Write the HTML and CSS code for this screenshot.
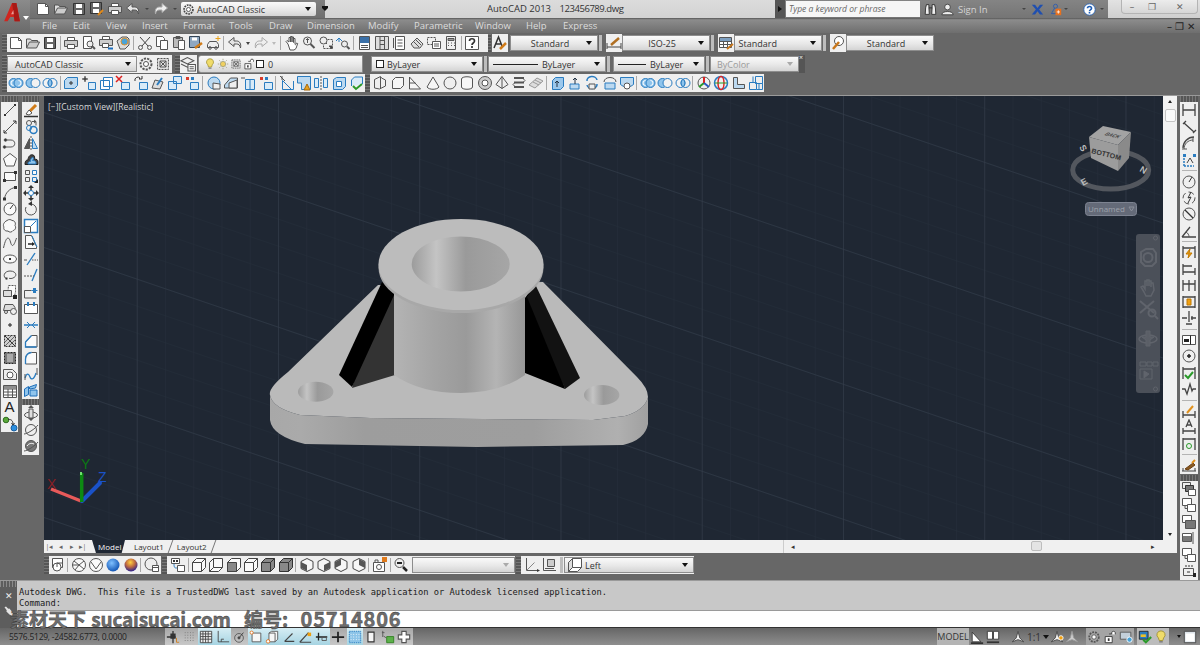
FILE: index.html
```html
<!DOCTYPE html>
<html lang="en">
<head>
  <meta charset="UTF-8" />
  <title>AutoCAD 2013 - 123456789.dwg</title>
  <link rel="stylesheet" href="styles.css">
</head>
<body>
<svg class="defs" aria-hidden="true">
  <defs>
    <!-- file / edit -->
    <symbol id="new" viewBox="0 0 16 16"><path fill="#fff" d="M2.5 2.5h8l3 3v8h-11z"/><path d="M10.5 2.5v3h3"/></symbol>
    <symbol id="open" viewBox="0 0 16 16"><path fill="#ddd" d="M1.5 13V4h4l1 1.5h6V7"/><path fill="#ccc" d="M1.5 13l3-6h10l-3 6z"/></symbol>
    <symbol id="save" viewBox="0 0 16 16"><path fill="#666" stroke="#333" d="M2.5 2.5h11v11h-11z"/><path fill="#fff" stroke="none" d="M5 3h6v4H5zM5 9h6v4H5z"/></symbol>
    <symbol id="saveas" viewBox="0 0 16 16"><path fill="#666" stroke="#333" d="M1.5 1.5h11v11h-11z"/><path fill="#fff" stroke="none" d="M4 2h6v4H4zM4 8h6v4H4z"/><path stroke="#e08a1c" stroke-width="2" d="M9 14l5-5"/></symbol>
    <symbol id="print" viewBox="0 0 16 16"><path fill="#fff" d="M4.5 5.5v-3h7v3"/><path fill="#ccc" d="M1.5 5.5h13v6h-13z"/><path fill="#fff" d="M4.5 9.5h7v4h-7z"/></symbol>
    <symbol id="prev" viewBox="0 0 16 16"><path fill="#fff" d="M2.5 1.5h8v12h-8z"/><circle cx="9" cy="9" r="3" fill="#eee"/><path stroke-width="2" d="M11 11l3 3"/></symbol>
    <symbol id="plot" viewBox="0 0 16 16"><path fill="#fff" d="M4.5 4.5v-3h7v3"/><path fill="#ccc" d="M1.5 4.5h13v6h-13z"/><path fill="#fff" d="M4.5 8.5h6v4h-6z"/><path stroke="#1c6fc0" stroke-width="2" d="M10 13.5h5"/></symbol>
    <symbol id="pub" viewBox="0 0 16 16"><path fill="#ddd" d="M2 6l5-4h5l2 2v6l-4 4H5z"/><circle cx="9.5" cy="6.5" r="3.5" fill="#4aa3d8" stroke="#e0902a"/></symbol>
    <symbol id="cut" viewBox="0 0 16 16"><path stroke="#444" d="M3 2l8 9M13 2L5 11"/><circle cx="3.5" cy="12.5" r="2"/><circle cx="12.5" cy="12.5" r="2"/></symbol>
    <symbol id="copy" viewBox="0 0 16 16"><path fill="#fff" d="M2.5 1.5h6l2 2v8h-8z"/><path fill="#fff" d="M6.5 5.5h7v9h-7z"/></symbol>
    <symbol id="paste" viewBox="0 0 16 16"><path fill="#bbb" d="M2.5 2.5h9v10h-9z"/><path fill="#fff" d="M7.5 5.5h6v9h-6z"/><path d="M5 1.5h4v2H5z"/></symbol>
    <symbol id="match" viewBox="0 0 16 16"><path fill="#8fa7c0" stroke="#345" d="M1.5 1.5h10v11h-10z"/><path fill="#fff" stroke="none" d="M4 2.5h5v3H4z"/><path stroke="#d07b18" stroke-width="2.5" d="M7 13l7-5"/></symbol>
    <symbol id="blk" viewBox="0 0 16 16"><path fill="#eee" d="M1.5 9.5l2-3h7l2 3v3h-11z"/><circle cx="4" cy="13" r="1.3"/><circle cx="10" cy="13" r="1.3"/><path stroke="#e8a21c" d="M12 1v5M9.500 3.500h5"/></symbol>
    <symbol id="undo" viewBox="0 0 16 16"><path fill="#e4e4e4" stroke="#555" d="M7 2.500L1.500 7 7 11.500V9h2.500c2 0 3.500 1 4 4 .8-4-.5-7-4-7H7z"/></symbol>
    <symbol id="redo" viewBox="0 0 16 16"><path fill="#eee" stroke="#aaa" d="M9 2.500L14.500 7 9 11.500V9H6.500c-2 0-3.500 1-4 4-.8-4 .5-7 4-7H9z"/></symbol>
    <symbol id="pan" viewBox="0 0 16 16"><path fill="#fff" d="M4 9L2 6.500l1-1L5 7V2.500h1.500V7V1.500H8V7V2h1.500v5.500V3.500H11V9c0 1 1 1 1.500-1l1.200.5L12 13.500 10 15H6z"/></symbol>
    <symbol id="zr" viewBox="0 0 16 16"><circle cx="6.500" cy="6" r="4" fill="#eee"/><path stroke-width="2" d="M9.500 9l4 4"/><path d="M6.500 3.500V8M5 5l1.500-1.500L8 5"/></symbol>
    <symbol id="zw" viewBox="0 0 16 16"><circle cx="5.500" cy="5.500" r="3.500" fill="#eee"/><path d="M8 8l1 1"/><path stroke-dasharray="2 1" d="M9.500 4.500h5v9h-9v-3"/><path fill="#333" d="M11 11h3v3z"/></symbol>
    <symbol id="zp" viewBox="0 0 16 16"><circle cx="9.500" cy="9" r="3" fill="#eee"/><path stroke-width="2" d="M12 11.500l2.500 2.500"/><path stroke="#2a7cc0" d="M1 6l3-3 3 3M4 3v4"/></symbol>
    <symbol id="prop" viewBox="0 0 16 16"><path fill="#fff" d="M2.500 1.500h10v13h-10z"/><path fill="#3a70a8" stroke="none" d="M3 2h9v6H3z"/><path d="M4 10.500h7M4 12.500h7"/></symbol>
    <symbol id="dc" viewBox="0 0 16 16"><path fill="#ddd" d="M1.500 1.500h13v13h-13z"/><path d="M6 1.500v13M10.500 1.500v13M6 5.500h4.500M6 9.500h4.500"/></symbol>
    <symbol id="sheet" viewBox="0 0 16 16"><path fill="#fff" d="M4.500 1.500h9v13h-9z"/><path d="M2.500 3v10M6.500 5h5M6.500 8h5M6.500 11h5"/></symbol>
    <symbol id="markup" viewBox="0 0 16 16"><path fill="#ddd" d="M2 9l6-6 6 6-3 4H5z"/><path d="M5 7l5 5M7 5l5 5"/></symbol>
    <symbol id="sset" viewBox="0 0 16 16"><path stroke-dasharray="2 1" d="M1.500 2.500h8v7h-8z"/><path fill="#fff" d="M6.500 6.500h8v7h-8z"/><path d="M8 9h5M8 11h5"/></symbol>
    <symbol id="calc" viewBox="0 0 16 16"><path fill="#eee" d="M3.500 1.500h9v13h-9z"/><path fill="#999" d="M5 3.500h6v2H5z"/><path d="M5 8h1M8 8h1M11 8h1M5 10.500h1M8 10.500h1M11 10.500h1"/></symbol>
    <symbol id="help" viewBox="0 0 16 16"><path fill="#fff" d="M1.500 1.500h13v13h-13z"/><path stroke="#333" stroke-width="1.700" d="M5.500 6c0-3 5-3 5 0 0 2-2.500 2-2.500 4M8 11v2"/></symbol>
    <symbol id="tsty" viewBox="0 0 16 16"><path stroke="#333" stroke-width="1.500" d="M2 13L6.500 2 10 11M3.500 9h5"/><path stroke="#d07b18" stroke-width="2.500" d="M8 14l6-6"/></symbol>
    <symbol id="dsty" viewBox="0 0 16 16"><path stroke="#444" d="M1 8v6M15 8v6M1 12h14"/><path stroke="#b06f22" stroke-width="2.500" d="M5 10l8-7"/></symbol>
    <symbol id="tbs" viewBox="0 0 16 16"><path fill="#fff" d="M1.500 2.500h12v10h-12z"/><path fill="#7d9fc0" stroke="none" d="M2 3h11v3H2z"/><path d="M1.500 6.500h12M1.500 9.500h12M5.500 6.500v6M9.500 6.500v6"/><path stroke="#c8761a" stroke-width="2" d="M9 14l6-5"/></symbol>
    <symbol id="mls" viewBox="0 0 16 16"><circle cx="9" cy="6" r="4.500" fill="#fff"/><path stroke="#c8761a" stroke-width="2.500" d="M3 14l6-7"/></symbol>
    <symbol id="gear" viewBox="0 0 16 16"><circle cx="8" cy="8" r="5.500" stroke-dasharray="2.200 1.100" stroke-width="2" fill="none"/><circle cx="8" cy="8" r="2.500" fill="#fff"/></symbol>
    <symbol id="lock" viewBox="0 0 16 16"><path fill="#ddd" stroke-dasharray="2 1" d="M2.500 2.500h11v11h-11z"/><path d="M5 5h6v6H5z"/><path d="M5 5l6 6M11 5l-6 6"/></symbol>
    <symbol id="layer" viewBox="0 0 16 16"><path d="M1 5l6-3 6 3-6 3z"/><path d="M1 8l6 3 1-.5"/><path fill="#fff" d="M7.500 8.500h7v6h-7z"/><path d="M9 10.500h4M9 12.500h4"/></symbol>
    <!-- solid editing -->
    <symbol id="uni" viewBox="0 0 16 16"><circle cx="5.500" cy="8" r="4.500" fill="#8fc4ec" stroke="#2a7cc0"/><circle cx="10.500" cy="8" r="4.500" fill="#8fc4ec" stroke="#2a7cc0"/><path stroke="#fff" d="M5.500 5.500a2.500 2.500 0 0 0 0 5M10.500 5.500a2.500 2.500 0 0 1 0 5"/></symbol>
    <symbol id="sbt" viewBox="0 0 16 16"><circle cx="5.500" cy="8" r="4.500" fill="#8fc4ec" stroke="#2a7cc0"/><circle cx="10.500" cy="8" r="4.500" fill="#f2f2f2" stroke="#2a7cc0"/></symbol>
    <symbol id="its" viewBox="0 0 16 16"><circle cx="5.500" cy="8" r="4.500" fill="#f2f2f2" stroke="#2a7cc0"/><circle cx="10.500" cy="8" r="4.500" fill="none" stroke="#2a7cc0"/><path fill="#8fc4ec" stroke="#2a7cc0" d="M8 4.300a4.500 4.500 0 0 1 0 7.400 4.500 4.500 0 0 1 0-7.400z"/></symbol>
    <symbol id="s1" viewBox="0 0 16 16"><path fill="#bcd9f0" stroke="#2a7cc0" d="M1.500 5.500l3-3h10v8l-3 3h-10z"/><path stroke="#333" d="M8 10V6M6 8h4"/></symbol>
    <symbol id="s2" viewBox="0 0 16 16"><path stroke="#2a7cc0" fill="#d9ebf8" d="M7.500 7.500h7v7h-7z"/><path stroke="#333" d="M1 4h6M4 1v6"/><path fill="#333" d="M3 3h2v2H3z"/></symbol>
    <symbol id="s3" viewBox="0 0 16 16"><path stroke="#2a7cc0" fill="#fff" d="M5.500 2.500h9v9h-9zM2.500 5.500h9v9h-9z"/></symbol>
    <symbol id="s4" viewBox="0 0 16 16"><path stroke="#2a7cc0" fill="#d9ebf8" d="M6.500 7.500h8v7h-8z"/><path stroke="#d22" stroke-width="1.500" d="M1 1l6 6M7 1L1 7"/></symbol>
    <symbol id="s5" viewBox="0 0 16 16"><path stroke="#2a7cc0" fill="#d9ebf8" d="M6.500 7.500h8v7h-8z"/><path stroke="#333" d="M2 6a3 3 0 0 1 5-3l-1 1h3V1"/></symbol>
    <symbol id="s6" viewBox="0 0 16 16"><path fill="#ddd" stroke="#555" d="M2 13l3-8 8 2-3 7z"/><path stroke="#2a7cc0" stroke-width="2" d="M7 10l5-7"/></symbol>
    <symbol id="s7" viewBox="0 0 16 16"><path stroke="#2a7cc0" fill="#d9ebf8" d="M6.500 1.500h8v7h-8zM1.500 6.500h8v8h-8z"/></symbol>
    <symbol id="s8" viewBox="0 0 16 16"><path fill="#d83a2a" stroke="none" d="M2 2h3v3H2z"/><path fill="#2a7cc0" stroke="none" d="M7 2h3v3H7z"/><path stroke="#2a7cc0" fill="#d9ebf8" d="M6.500 7.500h8v7h-8z"/></symbol>
    <symbol id="s9" viewBox="0 0 16 16"><circle cx="8" cy="8" r="6" fill="#bcd9f0" stroke="#2a7cc0"/><path fill="#eee" stroke="#555" d="M7 14V8l7 1v5z"/></symbol>
    <symbol id="s10" viewBox="0 0 16 16"><path fill="#bcd9f0" stroke="#555" d="M1.500 10l6-7h7v10h-13z"/><path fill="#eee" stroke="#555" d="M6 13V8l8-3v8z"/></symbol>
    <symbol id="s11" viewBox="0 0 16 16"><path stroke="#555" d="M1 3h4"/><path fill="#d9ebf8" stroke="#2a7cc0" d="M5.500 4.500h9v10h-9z"/><path stroke="#2a7cc0" d="M10 4.500v10"/></symbol>
    <symbol id="s12" viewBox="0 0 16 16"><path stroke="#555" d="M1 1l5 5M3 1v4"/><path fill="none" stroke="#2a7cc0" d="M3.500 14.500v-9l9 9zM8 14.500h6.500V6"/></symbol>
    <symbol id="s13" viewBox="0 0 16 16"><path fill="#bcd9f0" stroke="#2a7cc0" d="M1.500 1.500h13v13h-9V8h-4z"/><path fill="#e8a21c" stroke="#a5680f" d="M8 15l3-6 3 6z"/></symbol>
    <symbol id="s14" viewBox="0 0 16 16"><path fill="#d9ebf8" stroke="#2a7cc0" d="M1.500 3.500h4v9h-4zM10.500 3.500h4v9h-4z"/><path stroke="#555" stroke-dasharray="2 1" d="M8 1v14"/></symbol>
    <symbol id="s15" viewBox="0 0 16 16"><path fill="#bcd9f0" stroke="#2a7cc0" d="M2.500 4.500l3-2h9v9l-3 3h-9z"/><path fill="#fff" stroke="#2a7cc0" d="M5.500 6.500h5v5h-5z"/></symbol>
    <symbol id="s16" viewBox="0 0 16 16"><path fill="#d9ebf8" stroke="#2a7cc0" d="M3.500 11V5l3-3h8v7"/><path stroke="#2a9a2a" stroke-width="2" d="M5 11l3 3 6-5"/></symbol>
    <!-- modeling -->
    <symbol id="m1" viewBox="0 0 16 16"><path fill="#eee" d="M1.500 13V4.500l6-3 1 1.500 4 2v6l-6 3z"/><path d="M7.500 2v11"/></symbol>
    <symbol id="m2" viewBox="0 0 16 16"><path fill="#f6f6f6" d="M2.500 5.500l3-3h8v8l-3 3h-8z"/></symbol>
    <symbol id="m3" viewBox="0 0 16 16"><path fill="#f6f6f6" d="M2.500 14V2l11 12z"/><path d="M2.500 8h6"/></symbol>
    <symbol id="m4" viewBox="0 0 16 16"><path fill="#f6f6f6" d="M8 2l6 10c-2 3-10 3-12 0z"/></symbol>
    <symbol id="m5" viewBox="0 0 16 16"><circle cx="8" cy="8" r="6" fill="#eee"/></symbol>
    <symbol id="m6" viewBox="0 0 16 16"><path fill="#f6f6f6" d="M2.500 4c0-3 11-3 11 0v8c0 3-11 3-11 0z"/></symbol>
    <symbol id="m7" viewBox="0 0 16 16"><circle cx="8" cy="8" r="6.500" fill="#ccc"/><circle cx="8" cy="8" r="3" fill="#fff"/></symbol>
    <symbol id="m8" viewBox="0 0 16 16"><path fill="#eee" d="M8 1.500l6 8-6 4-6-4z"/><path d="M8 1.500v12"/></symbol>
    <symbol id="m9" viewBox="0 0 16 16"><path d="M3 3.500h9l2 2-2 2H4L2 9.500l2 2h9"/><path stroke-width="2" d="M3 3h10M3 7.500h10M3 12h10"/></symbol>
    <symbol id="m10" viewBox="0 0 16 16"><path fill="#ddd" stroke="#999" d="M1 10l8-7 6 3-8 7z"/><path stroke="#999" d="M5 7l6 3M7 5l6 3"/></symbol>
    <symbol id="m11" viewBox="0 0 16 16"><path fill="#9cc8ec" stroke="#2a7cc0" d="M2.500 5.500l3-3h8v9l-3 3h-8z"/><path stroke="#234" d="M7 12V6M5 8l2-2 2 2"/></symbol>
    <symbol id="m12" viewBox="0 0 16 16"><path fill="#bcd9f0" stroke="#2a7cc0" d="M3 9h9v5H3z"/><path stroke="#234" d="M8 9V3M6 5l2-2 2 2"/></symbol>
    <symbol id="m13" viewBox="0 0 16 16"><path stroke="#2a7cc0" fill="none" stroke-width="1.500" d="M3 6a5 4 0 0 1 10-1M13 9a5 4 0 0 1-10 1"/><path fill="#eee" stroke="#555" d="M5 9h6v5H5z"/></symbol>
    <symbol id="m14" viewBox="0 0 16 16"><path stroke="#555" d="M2 7c0-6 12-6 12 0"/><path fill="#bcd9f0" stroke="#2a7cc0" d="M3 8h10v6H3z"/></symbol>
    <symbol id="m15" viewBox="0 0 16 16"><path fill="#bcd9f0" stroke="#2a7cc0" d="M1.500 2.500h13v7l-3 2h-7l-3-2z"/><circle cx="8" cy="11" r="3" fill="#fff" stroke="#555"/></symbol>
    <symbol id="o3" viewBox="0 0 16 16"><circle cx="8" cy="8" r="6" stroke="#555"/><path stroke="#2a9a2a" stroke-width="2" d="M8 8L3 12"/><path stroke="#d22" stroke-width="2" d="M8 8V2"/><path stroke="#2a5ac0" stroke-width="2" d="M8 8l5 4"/></symbol>
    <symbol id="o4" viewBox="0 0 16 16"><circle cx="8" cy="8" r="6.500" stroke="#2a7cc0" stroke-width="1.500"/><ellipse cx="8" cy="8" rx="3" ry="6.500" stroke="#d22" stroke-width="1.500"/><path stroke="#2a9a2a" d="M2 8h12"/></symbol>
    <symbol id="o5" viewBox="0 0 16 16"><path fill="#bcd9f0" stroke="#555" d="M3.500 2.500h4v7h7v4h-11z"/></symbol>
    <symbol id="o6" viewBox="0 0 16 16"><path stroke="#2a7cc0" d="M7.500 1.500h7v7h-7zM1.500 7.500h7v7h-7zM7.500 8.500h7v6h-6M5 1.500v6M11 8.500v6"/></symbol>
    <!-- draw -->
    <symbol id="line" viewBox="0 0 16 16"><path d="M3 13L13 3"/><path fill="#333" stroke="none" d="M2 12h2v2H2zM12 2h2v2h-2z"/></symbol>
    <symbol id="xline" viewBox="0 0 16 16"><path d="M2 14L14 2"/><path stroke="#333" d="M2 11v3h3M11 2h3v3"/></symbol>
    <symbol id="pline" viewBox="0 0 16 16"><path d="M2 12h7c5 0 5-7 0-7H4"/><circle cx="2.500" cy="12" r="1.300" fill="#333"/><circle cx="3.500" cy="5" r="1.300" fill="#333"/></symbol>
    <symbol id="polygon" viewBox="0 0 16 16"><path fill="#fafafa" d="M8 1.500l6.500 5-2.500 7.500H4L1.500 6.500z"/></symbol>
    <symbol id="rect" viewBox="0 0 16 16"><path fill="#fafafa" d="M2.500 4.500h11v8h-11z"/><path fill="#333" stroke="none" d="M12 3h3v3h-3zM1 11h3v3H1z"/></symbol>
    <symbol id="arc" viewBox="0 0 16 16"><path d="M2.500 14C3 8 8 3 13.500 2.500"/><path fill="#333" stroke="none" d="M1 12.500h3v3H1zM12 1h3v3h-3z"/></symbol>
    <symbol id="circle" viewBox="0 0 16 16"><circle cx="8" cy="8" r="6" fill="#fafafa"/><path stroke="#333" d="M8 8l3-4"/></symbol>
    <symbol id="cloud" viewBox="0 0 16 16"><path fill="#fafafa" d="M5 2.500c2-1.500 4-1 5 0 3 0 4 3 3 5 1.500 2 0 5-2 5-1 2-4 2-5 .5-3 .5-5-2-4-4-1.500-2 0-5 3-6.500z"/></symbol>
    <symbol id="spline" viewBox="0 0 16 16"><path d="M1.500 14C4 2 7 2 8.500 8s3.500 4 6-4"/></symbol>
    <symbol id="ellipse" viewBox="0 0 16 16"><ellipse cx="8" cy="8" rx="6.500" ry="4" fill="#fafafa"/><path fill="#333" stroke="none" d="M7 7h2v2H7z"/></symbol>
    <symbol id="earc" viewBox="0 0 16 16"><path d="M5 12C0 10 2 4 8 4s8 5 3 7c-1 .6-3 .6-4 .3"/><path fill="#333" stroke="none" d="M3.500 10.500h2v2h-2z"/></symbol>
    <symbol id="ins" viewBox="0 0 16 16"><path stroke-dasharray="2 1" fill="#fafafa" d="M6.500 1.500h7v6l-1 5h-7z"/><path fill="#ddd" d="M1.500 6.500h8v6h-8z"/><path fill="#222" stroke="none" d="M11 11h4v4h-4z"/></symbol>
    <symbol id="mkb" viewBox="0 0 16 16"><path fill="#ddd" d="M1.500 10.500l1.500-6h8l2 3v3z"/><circle cx="11.500" cy="11.500" r="3" fill="#eee"/><circle cx="4" cy="12" r="1.500"/></symbol>
    <symbol id="pt" viewBox="0 0 16 16"><circle cx="8" cy="8" r="1.300" fill="#555"/></symbol>
    <symbol id="hatch" viewBox="0 0 16 16"><path fill="#cfcfcf" stroke-dasharray="2 1" stroke="#333" d="M2.500 2.500h11v11h-11z"/><path stroke="#666" d="M3 9l6-6M3 13L13 3M7 13l6-6"/><path stroke="#333" d="M3 3l10 10"/></symbol>
    <symbol id="grad" viewBox="0 0 16 16"><path fill="#777" stroke-dasharray="2 1" stroke="#222" d="M2.500 2.500h11v11h-11z"/><path fill="#aaa" stroke="none" d="M5 4h6v8H5z"/></symbol>
    <symbol id="reg" viewBox="0 0 16 16"><path fill="#eee" d="M1.500 3.500h9l4 4v6h-13z"/><circle cx="8" cy="9" r="3" fill="#fff"/></symbol>
    <symbol id="tbl" viewBox="0 0 16 16"><path fill="#fff" d="M1.500 2.500h13v12h-13z"/><path fill="#8d8d8d" stroke="none" d="M2 3h12v2.500H2z"/><path d="M1.500 6h13M1.500 9h13M1.500 12h13M6 6v8.500M10.500 6v8.500"/></symbol>
    <symbol id="addsel" viewBox="0 0 16 16"><circle cx="4" cy="4" r="2.800" fill="#5aa83a" stroke="#2f6f20"/><circle cx="12" cy="12" r="3" fill="#2a8ee0" stroke="#1a5fa0"/><path stroke="#333" d="M6 3.500c4-.5 5 2 5 5M9.500 7l1.500 2 1.500-2"/></symbol>
    <!-- modify -->
    <symbol id="erase" viewBox="0 0 16 16"><path stroke="#d07b18" stroke-width="3" d="M7 9l6-6"/><path fill="#fff" stroke="#555" d="M3 12l3-4 3 3-3 2z"/><path stroke="#333" stroke-width="1.500" d="M1 14.500h14"/></symbol>
    <symbol id="cpo" viewBox="0 0 16 16"><circle cx="6" cy="4" r="2.500"/><circle cx="10.500" cy="11" r="3.500" stroke="#2a7cc0" stroke-width="1.500"/><circle cx="6" cy="9" r="2.500" stroke="#2a7cc0"/><path d="M9 2.500h4v4M11 1l2 1.500L11 4"/></symbol>
    <symbol id="mir" viewBox="0 0 16 16"><path fill="#555" d="M1.500 13.500l5-10v10z"/><path fill="#bcd9f0" stroke="#2a7cc0" d="M14.500 13.500l-5-10v10z"/><path stroke-dasharray="2 1" d="M8 1v14"/></symbol>
    <symbol id="off" viewBox="0 0 16 16"><path fill="#444" stroke="#222" d="M2 12.500C2 8 4 8 5 8c0-4 3-6 5-5 2 .5 2 3 1 4 3 0 4 1 4 3v2.500z"/><path fill="#8fc4ec" stroke="#2a7cc0" d="M5 12c0-2 1-2.500 2.500-2.500 0-3 1-4 2.500-4 1 .5 0 2.500-.5 3 3 0 3.500 1 3.500 3.500z"/></symbol>
    <symbol id="arr" viewBox="0 0 16 16"><path stroke="#2a7cc0" fill="#fafafa" d="M9.500 2.500h4v4h-4z"/><path d="M2.500 2.500h4v4h-4zM2.500 9.500h4v4h-4z"/><path stroke="#2a7cc0" d="M9.500 9.500h4v4h-4z"/><path fill="#222" stroke="none" d="M11 15l4-4v4z"/></symbol>
    <symbol id="mov" viewBox="0 0 16 16"><path stroke="#333" stroke-width="1.500" d="M8 1.500v13M1.500 8h13"/><path fill="#333" stroke="none" d="M8 0l3 3H5zM8 16l3-3H5zM0 8l3-3v6zM16 8l-3-3v6z"/><circle cx="8" cy="8" r="2.500" fill="#fff" stroke="#2a7cc0"/></symbol>
    <symbol id="rot" viewBox="0 0 16 16"><path d="M8 3a5.500 5.500 0 1 1-5 3"/><path fill="#333" stroke="none" d="M9 0v5L5 3z"/></symbol>
    <symbol id="scl" viewBox="0 0 16 16"><path fill="#fff" stroke="#2a7cc0" stroke-width="1.500" d="M1.500 1.500h13v13h-13z"/><path fill="#fff" stroke="#555" d="M1.500 8.500h6v6h-6z"/><path stroke="#2a7cc0" d="M8 8l5-5"/></symbol>
    <symbol id="str" viewBox="0 0 16 16"><path fill="#fafafa" d="M2.500 1.500h6l5 11v2h-11z"/><path stroke="#2a7cc0" d="M9 2l5 11"/><path stroke="#222" stroke-width="1.500" d="M5 10h5"/><path fill="#222" stroke="none" d="M9 8l3 2-3 2z"/></symbol>
    <symbol id="trim" viewBox="0 0 16 16"><path stroke="#2a7cc0" stroke-width="1.300" d="M12 2L4 14"/><path d="M1 9h3"/><path stroke-dasharray="1.500 1" d="M9 9h6"/></symbol>
    <symbol id="ext" viewBox="0 0 16 16"><path stroke="#2a7cc0" stroke-width="1.300" d="M14 2l-5 12"/><path stroke-dasharray="2 1" d="M1 9h10"/></symbol>
    <symbol id="brk" viewBox="0 0 16 16"><path d="M1.500 14V6.500h7"/><path stroke="#2a7cc0" d="M8.500 6.500h6"/><path fill="#2a7cc0" stroke="none" d="M10 4h3v5h-3z"/><path d="M1.500 14h12"/></symbol>
    <symbol id="jn" viewBox="0 0 16 16"><path fill="#fff" d="M1.500 4.500h13v9h-13z"/><path fill="#2a7cc0" stroke="none" d="M4 2h2v4H4zM10 2h2v4h-2z"/></symbol>
    <symbol id="jn2" viewBox="0 0 16 16"><path stroke="#2a7cc0" stroke-width="1.500" d="M1 8h14"/><path stroke="#2a7cc0" d="M4 5l3 3-3 3M12 5L9 8l3 3"/></symbol>
    <symbol id="cha" viewBox="0 0 16 16"><path fill="#fafafa" d="M2.500 14V9l6-6.500h5.500V14z"/><path stroke="#2a7cc0" stroke-width="1.300" d="M2.500 9l6-6.500M2.500 9v5h11"/></symbol>
    <symbol id="fil" viewBox="0 0 16 16"><path fill="#fafafa" stroke="#555" d="M13.500 2.500V14h-11V9c0-4 3-6.500 6-6.500z"/><path stroke="#2a7cc0" stroke-width="1.300" d="M2.500 14V9c0-4 3-6.500 6-6.500"/></symbol>
    <symbol id="ble" viewBox="0 0 16 16"><path stroke="#2a7cc0" stroke-width="1.300" d="M2 12c2-6 4-4 5-1s4 3 6-4"/><path d="M2 14V8M14 9V2"/></symbol>
    <symbol id="exp" viewBox="0 0 16 16"><path fill="#8fc4ec" stroke="#1f6eb8" d="M1.500 6l4-2.500v8l-4 2zM6.500 4l7-2.500-1 3.500-6 1zM7 7h7v6H7z"/></symbol>
    <symbol id="orb" viewBox="0 0 16 16"><ellipse cx="8" cy="10" rx="6.500" ry="3"/><path fill="#ddd" stroke="#555" d="M6 4h4v9H6z"/><path fill="#555" stroke="none" d="M8 0l3 3H5zM8 16l3-3H5z"/></symbol>
    <symbol id="orb2" viewBox="0 0 16 16"><circle cx="8" cy="8" r="5.500" fill="#eee"/><path d="M1 12C4 12 12 7 15 3"/></symbol>
    <symbol id="orb3" viewBox="0 0 16 16"><circle cx="8" cy="8" r="5.500" fill="#777"/><path stroke="#fff" d="M4 8c2-3 5-3 7-2"/><path d="M1 13c3 0 11-5 14-9"/></symbol>
    <!-- dimension -->
    <symbol id="d1" viewBox="0 0 16 16"><path stroke="#444" stroke-width="1.300" d="M2 2v12M14 2v12M2 8h12"/></symbol>
    <symbol id="d2" viewBox="0 0 16 16"><path stroke="#444" stroke-width="1.300" d="M2 5l3-3M12 14l3-3M3 4l10 9"/></symbol>
    <symbol id="d3" viewBox="0 0 16 16"><path stroke="#444" stroke-width="1.300" d="M2 13a11 11 0 0 1 11-11"/><path d="M3 14c0-5 4-9 9-9M12 2v5M1 14h5"/></symbol>
    <symbol id="d4" viewBox="0 0 16 16"><path stroke="#2a7cc0" stroke-width="1.500" stroke-dasharray="2 1" d="M3 14V3M3 14h10"/><path stroke="#444" d="M6 11l3-5 3 5"/><path fill="#2a7cc0" stroke="none" d="M2 2h3v3H2zM12 2h3v3h-3z"/></symbol>
    <symbol id="d5" viewBox="0 0 16 16"><circle cx="8" cy="9" r="6"/><path stroke="#333" d="M8 9l3-5"/></symbol>
    <symbol id="d6" viewBox="0 0 16 16"><circle cx="8" cy="8" r="6" stroke-dasharray="6 3 0 0"/><path stroke="#333" d="M10 2L7 8l3-1-3 6"/></symbol>
    <symbol id="d7" viewBox="0 0 16 16"><circle cx="8" cy="8" r="6"/><path stroke="#333" stroke-width="1.300" d="M4 4l8 8"/></symbol>
    <symbol id="d8" viewBox="0 0 16 16"><path stroke="#444" stroke-width="1.300" d="M1 14h14M1 14L9 4"/><path d="M5 9c2 1 3 3 3 5"/></symbol>
    <symbol id="d9" viewBox="0 0 16 16"><path stroke="#444" stroke-width="1.300" d="M2 2v12M14 2v12M2 4h12"/><path fill="#f0a010" stroke="#c07800" d="M9 5L5 10h3l-1 4 4-5H8z"/></symbol>
    <symbol id="d10" viewBox="0 0 16 16"><path stroke="#444" stroke-width="1.300" d="M2 3v11M14 7v7M2 5h9M2 11h12"/></symbol>
    <symbol id="d11" viewBox="0 0 16 16"><path stroke="#444" stroke-width="1.300" d="M2 3v11M8 3v11M14 3v11M2 7h12"/></symbol>
    <symbol id="d12" viewBox="0 0 16 16"><path stroke="#444" stroke-width="1.300" d="M2 2v12M14 2v12M2 3h12M2 13h12"/><path fill="#f0a010" stroke="#c07800" d="M6 5h4v6H6z"/></symbol>
    <symbol id="d13" viewBox="0 0 16 16"><path stroke="#444" stroke-width="1.300" d="M8 1v11M1 8h5M10 8h5M5 14h6M11 6v4"/></symbol>
    <symbol id="d14" viewBox="0 0 16 16"><path fill="#fff" d="M1.500 3.500h13v9h-13z"/><path stroke="#222" d="M9.500 3.500v9"/><path fill="#222" stroke="none" d="M3 7h5v3H3z"/></symbol>
    <symbol id="d15" viewBox="0 0 16 16"><circle cx="8" cy="8" r="6"/><path stroke="#222" stroke-width="1.500" d="M6 8h4M8 6v4"/></symbol>
    <symbol id="d16" viewBox="0 0 16 16"><path stroke="#444" stroke-width="1.300" d="M2 2v12M14 2v12M2 4h12"/><path stroke="#2a9a2a" stroke-width="2" d="M4 10l3 3 5-6"/></symbol>
    <symbol id="d17" viewBox="0 0 16 16"><path stroke="#444" stroke-width="1.300" d="M1 8h3l2 5 3-10 2 7 1-2h3"/></symbol>
    <symbol id="d18" viewBox="0 0 16 16"><path stroke="#444" stroke-width="1.300" d="M2 8v7M14 8v7M2 12h12"/><path stroke="#e0901c" stroke-width="2" d="M6 10l6-7"/></symbol>
    <symbol id="d19" viewBox="0 0 16 16"><path stroke="#444" stroke-width="1.300" d="M2 9v6M14 9v6M2 12h12M5 8l3-7 3 7M6 6h4"/></symbol>
    <symbol id="d20" viewBox="0 0 16 16"><path stroke="#444" stroke-width="1.300" d="M2 2v12M14 2v12M2 3h12"/><circle cx="8" cy="10" r="2.500" stroke="#2a9a2a"/></symbol>
    <symbol id="d21" viewBox="0 0 16 16"><path stroke="#444" d="M1 14h14M2 11v3M14 11v3"/><path fill="#8a5a22" stroke="#6a4014" d="M4 12l8-6 2 2-7 5z"/><path stroke="#e0901c" stroke-width="2" d="M11 6l3-3"/></symbol>
    <!-- draw order -->
    <symbol id="o1" viewBox="0 0 16 16"><path d="M1.500 1.500h8v6h-8z"/><path fill="#777" stroke="#333" d="M4.500 4.500h8v6h-8z"/><path fill="#fff" d="M7.500 8.500h7v6h-7z"/></symbol>
    <symbol id="o2" viewBox="0 0 16 16"><path fill="#fff" d="M1.500 1.500h9v7h-9z"/><path fill="#fff" d="M6.500 7.500h8v7h-8z"/><path d="M4 8.500v3h2"/></symbol>
    <symbol id="o7" viewBox="0 0 16 16"><path fill="#fff" d="M1.500 1.500h9v7h-9z"/><path fill="#777" d="M4.500 6.500h10v8h-10z"/></symbol>
    <symbol id="o8" viewBox="0 0 16 16"><path fill="#fff" d="M1.500 3.500h9v8h-9z"/><path fill="#777" stroke="none" d="M2 6h8v5H2z"/><path d="M12 2v12"/></symbol>
    <symbol id="o9" viewBox="0 0 16 16"><path d="M2.500 5.500h10v7h-10z"/><path fill="#222" stroke="none" d="M12 10h3v4h-3z"/><path stroke="#333" d="M4 3h2M7 3h2M10 3h2M6 9h3"/></symbol>
    <!-- view / render -->
    <symbol id="vs" viewBox="0 0 16 16"><path fill="#fff" d="M2.500 1.500h10v9h-10z"/><circle cx="7" cy="10" r="4" fill="#fff"/><path d="M7 10V6h5.500"/></symbol>
    <symbol id="v1" viewBox="0 0 16 16"><circle cx="8" cy="8" r="6.500" fill="#fafafa"/><path d="M3 4l10 8M13 4L8 8M4 13l4-5M1.500 8h6"/></symbol>
    <symbol id="v2" viewBox="0 0 16 16"><circle cx="8" cy="8" r="6.500" fill="#fafafa"/><path d="M3 5l5 7 5-7"/></symbol>
    <symbol id="v3" viewBox="0 0 16 16"><defs><radialGradient id="gb" cx=".4" cy=".35" r=".7"><stop offset="0" stop-color="#7fc0ff"/><stop offset="1" stop-color="#0b4fb0"/></radialGradient></defs><circle cx="8" cy="8" r="6.500" fill="url(#gb)" stroke="none"/></symbol>
    <symbol id="v4" viewBox="0 0 16 16"><defs><radialGradient id="go" cx=".45" cy=".3" r=".7"><stop offset="0" stop-color="#ffd040"/><stop offset=".5" stop-color="#c06a40"/><stop offset="1" stop-color="#2a2090"/></radialGradient></defs><circle cx="8" cy="8" r="6.500" fill="url(#go)" stroke="none"/></symbol>
    <symbol id="v5" viewBox="0 0 16 16"><circle cx="7" cy="7" r="6" fill="#eee"/><path fill="#fff" d="M8.500 8.500h6v6h-6z"/><path d="M8.500 10.500h6"/></symbol>
    <symbol id="v6" viewBox="0 0 16 16"><path fill="#fff" d="M1.500 1.500h8v5h-8z"/><path fill="#fff" d="M7.500 8.500h7v6h-7z"/><path stroke="#2a7cc0" d="M4 7c0 4 1 4 3 4"/><path fill="#333" stroke="none" d="M3 3h2v2H3zM6 3h2v2H6z"/></symbol>
    <symbol id="c1" viewBox="0 0 16 16"><path fill="#fafafa" stroke="#444" d="M1.500 5.500l4-4h9v9l-4 4h-9z"/><path stroke="#444" d="M1.500 5.500h9v9M10.500 5.500l4-4"/></symbol>
    <symbol id="c2" viewBox="0 0 16 16"><path fill="#fafafa" stroke="#444" d="M1.500 5.500l4-4h9v9l-4 4h-9z"/><path stroke="#444" d="M5.500 1.500v9h9M5.500 10.500l-4 4"/></symbol>
    <symbol id="c3" viewBox="0 0 16 16"><path fill="#fafafa" stroke="#444" d="M1.500 5.500l4-4h9v9l-4 4h-9z"/><path fill="#888" stroke="#444" d="M1.500 5.500h9v9h-9z"/></symbol>
    <symbol id="c4" viewBox="0 0 16 16"><path fill="#888" stroke="#333" d="M1.500 5.500l4-4h9v9l-4 4h-9z"/><path stroke="#333" d="M1.500 5.500h9v9M10.500 5.500l4-4"/></symbol>
    <symbol id="i1" viewBox="0 0 16 16"><path fill="#f6f6f6" stroke="#444" d="M8 1.500l6 3v7l-6 3-6-3v-7z"/><path fill="#555" stroke="none" d="M2 5l6 3v6l-6-3z"/></symbol>
    <symbol id="i2" viewBox="0 0 16 16"><path fill="#f6f6f6" stroke="#444" d="M8 1.500l6 3v7l-6 3-6-3v-7z"/><path fill="#555" stroke="none" d="M14 5l-6 3v6l6-3z"/></symbol>
    <symbol id="i3" viewBox="0 0 16 16"><path fill="#f6f6f6" stroke="#444" d="M8 1.500l6 3v7l-6 3-6-3v-7z"/><path fill="#555" stroke="none" d="M2 5l6-3v6l-6 3z"/></symbol>
    <symbol id="i4" viewBox="0 0 16 16"><path fill="#f6f6f6" stroke="#444" d="M8 1.500l6 3v7l-6 3-6-3v-7z"/><path fill="#555" stroke="none" d="M14 5L8 2v6l6 3z"/></symbol>
    <symbol id="cam" viewBox="0 0 16 16"><path fill="#fff" d="M1.500 5.500h11v9h-11z"/><circle cx="7" cy="10" r="2.500"/><path d="M3 5V3h3v2"/><path fill="#e07a1c" stroke="none" d="M10 0h5v5h-5z"/></symbol>
    <symbol id="zv" viewBox="0 0 16 16"><circle cx="6.500" cy="6" r="4.500" fill="#eee"/><path stroke="#222" stroke-width="2.500" d="M10 10l4 4"/><path stroke="#222" stroke-width="2" d="M4 6h5"/></symbol>
    <symbol id="ucs1" viewBox="0 0 16 16"><path d="M2.500 1v12.500H15"/><path stroke="#888" d="M2.500 13.500l8-8"/><path fill="#333" stroke="none" d="M13 12l3 1.500-3 1.500z"/></symbol>
    <symbol id="ucs2" viewBox="0 0 16 16"><path d="M2.500 1v12.500H15"/><path fill="#ccc" d="M6.500 2.500h7v7h-7z"/><path d="M4 11.500h9"/></symbol>
    <symbol id="vleft" viewBox="0 0 16 16"><path fill="#fff" d="M1.500 5.500l4-4h9v9l-4 4h-9z"/><path fill="#ddd" d="M5.500 1.500v9l-4 4v-9z"/><path d="M5.500 10.500h9"/></symbol>
    <!-- status bar -->
    <symbol id="t1" viewBox="0 0 16 16"><path stroke="#333" stroke-width="1.500" d="M8 1v14M1 8h10"/><path fill="#333" stroke="none" d="M5 4h6v6H5z"/><path stroke="#d07b18" d="M12 9v5h3"/></symbol>
    <symbol id="t2" viewBox="0 0 16 16"><path stroke="#777" stroke-dasharray="1 2" d="M2 3h12M2 6h12M2 9h12M2 12h12"/></symbol>
    <symbol id="t3" viewBox="0 0 16 16"><path fill="#f0f0f0" stroke="#444" d="M1.500 1.500h13v13h-13zM1.500 4.500h13M1.500 7.500h13M1.500 10.500h13M4.500 1.500v13M7.500 1.500v13M10.500 1.500v13"/></symbol>
    <symbol id="t4" viewBox="0 0 16 16"><path stroke="#444" d="M2.500 1v12.500H15M6 13.500v-3h3"/></symbol>
    <symbol id="t5" viewBox="0 0 16 16"><circle cx="8" cy="9" r="5"/><path stroke="#333" d="M8 9l5-6"/><circle cx="8" cy="9" r="1.300" fill="#333"/></symbol>
    <symbol id="t6" viewBox="0 0 16 16"><path fill="#f6f6f6" stroke="#555" d="M3.500 3.500h10v10h-10z"/><circle cx="3" cy="3" r="1.800" fill="#fff" stroke="#e0701c"/></symbol>
    <symbol id="t7" viewBox="0 0 16 16"><path fill="#f6f6f6" stroke="#555" d="M4.500 3.500l3-2h7v9l-3 3h-7z"/><path stroke="#555" d="M4.500 3.500h7v10"/><circle cx="3.500" cy="13" r="2" fill="#fff" stroke="#e0701c"/></symbol>
    <symbol id="t8" viewBox="0 0 16 16"><path stroke="#444" stroke-width="1.300" d="M3 13L12 4M3 13h11"/></symbol>
    <symbol id="t9" viewBox="0 0 16 16"><path stroke="#444" stroke-width="1.300" d="M2 14L12 3M2 14h13"/><path fill="#f0a010" stroke="none" d="M11 3h4v4h-4z"/></symbol>
    <symbol id="t10" viewBox="0 0 16 16"><path stroke="#222" stroke-width="1.500" d="M4 3v9M1 8h13"/><path d="M8 8h5v4H8z"/></symbol>
    <symbol id="t11" viewBox="0 0 16 16"><path stroke="#222" stroke-width="2" d="M8 2v12M1 8h14"/></symbol>
    <symbol id="t12" viewBox="0 0 16 16"><path fill="#8cc4e8" stroke="#2a7cc0" stroke-dasharray="1.500 1" d="M1.500 1.500h13v13h-13z"/><path stroke="#fff" stroke-dasharray="1 2" d="M3 5h10M3 8h10M3 11h10"/></symbol>
    <symbol id="t13" viewBox="0 0 16 16"><path fill="#f6f6f6" stroke="#333" stroke-width="1.300" d="M4.500 2.500h7v11h-7z"/></symbol>
    <symbol id="t14" viewBox="0 0 16 16"><path stroke="#555" d="M2 1v7M1 3h3"/><path fill="#5cb04a" stroke="#2f7f20" d="M6.500 7.500h8v7h-8z"/><path d="M3 7l3 2"/></symbol>
    <symbol id="t15" viewBox="0 0 16 16"><path fill="#fff" stroke="#555" stroke-width="1.300" d="M5.500 1.500h5v4h4v5h-4v4h-5v-4h-4v-5h4z"/></symbol>
    <symbol id="a1" viewBox="0 0 16 16"><path fill="#f4f4f4" stroke="#444" d="M8 1.500L10 9l4.500 4.500L8 11l-6.500 2.500L6 9z"/></symbol>
    <symbol id="a2" viewBox="0 0 16 16"><path fill="#f4f4f4" stroke="#444" d="M8 1.500L10 9l4.500 4.500L8 11l-6.500 2.500L6 9z"/><circle cx="12.500" cy="9" r="2.500" fill="#f0a010" stroke="#fff"/></symbol>
    <symbol id="a3" viewBox="0 0 16 16"><path fill="#ccc" stroke="#999" d="M8 1.500L10 9l4.500 4.500L8 11l-6.500 2.500L6 9z"/></symbol>
    <symbol id="a4" viewBox="0 0 16 16"><path fill="#fff" stroke="#333" d="M7 4.500h3V3c0-2 4-2 4 0v2"/><path fill="#fff" stroke="#333" d="M2.500 7.500h8v7h-8z"/><path fill="#333" stroke="none" d="M5.500 9.500h2v3h-2z"/></symbol>
    <symbol id="a5" viewBox="0 0 16 16"><path fill="#c4d0da" stroke="#555" d="M1.500 2.500h12v8h-12z"/><circle cx="12" cy="11" r="3" fill="#4aa3d8" stroke="#fff"/></symbol>
    <symbol id="a6" viewBox="0 0 16 16"><path fill="#2a7cc0" stroke="#222" d="M1.500 1.500h10v9h-10z"/><path fill="#e8c02a" stroke="none" d="M3 5h6v3H3z"/><path stroke="#2a9a2a" stroke-width="2.500" d="M6 11l3 3 6-6"/></symbol>
    <symbol id="a7" viewBox="0 0 16 16"><path fill="#f0dc6a" stroke="#a09030" d="M8 1a4.500 4.500 0 0 1 3 8l-1 3H6L5 9a4.500 4.500 0 0 1 3-8z"/><path stroke="#777" stroke-width="1.500" d="M6 13.500h4"/></symbol>
    <symbol id="a8" viewBox="0 0 16 16"><path fill="#dde4ea" stroke="#444" d="M1.500 1.500h13v13h-13z"/><path fill="#fff" stroke="none" d="M3 4h10v9H3z"/></symbol>
    <symbol id="l1" viewBox="0 0 16 16"><path stroke="#333" fill="#fff" d="M2.500 13.500V2.500l10 11z"/><path stroke-width="2" stroke="#333" d="M1 15h14"/></symbol>
    <symbol id="l2" viewBox="0 0 16 16"><path stroke="#333" fill="#fff" d="M1.500 1.500h6v9h-6zM8.500 1.500h6v9h-6z"/><path stroke-width="2" stroke="#333" d="M1 14h14"/></symbol>
    <!-- title bar -->
    <symbol id="bino" viewBox="0 0 16 16"><path fill="#eee" stroke="#222" d="M2 6l1-4h3v4l.5 8H1.500zM14 6l-1-4h-3v4l-.5 8h5z"/><path stroke="#222" d="M6 6h4"/></symbol>
    <symbol id="user" viewBox="0 0 16 16"><circle cx="8" cy="5" r="3.500" fill="#eee" stroke="#333"/><path fill="#eee" stroke="#333" d="M1 14.500c0-3 4-4 7-4s7 1 7 4z"/></symbol>
    <symbol id="xch" viewBox="0 0 16 16"><path fill="#1f4fb0" stroke="none" d="M1 2h4l3 4 3-4h4l-5 6 5 6h-4L8 10l-3 4H1l5-6z"/></symbol>
    <symbol id="store" viewBox="0 0 16 16"><circle cx="8" cy="4" r="2.500" stroke="#2a5ab0"/><path stroke="#2a5ab0" d="M7 6L3 13h6"/><path fill="#e8701c" stroke="none" d="M8 7h7v8H8z"/><path stroke="#fff" d="M11.500 9v4M9.500 11h4"/></symbol>
    <symbol id="qm" viewBox="0 0 16 16"><circle cx="8" cy="8" r="7" fill="#fff" stroke="#1f5fb8"/><path stroke="#1f5fb8" stroke-width="2" d="M5.500 6.500c0-3 5-3 5 0 0 2-2.500 2-2.500 3.500M8 11v2"/></symbol>
  </defs>
</svg>

<header class="top">
  <div class="appbtn">
    <svg class="logo" viewBox="0 0 20 24"><path fill="#d0261f" d="M1 22L10 1h5l4 21h-6l-1-5H8l-3 5z"/><path fill="#a81a16" d="M10 1h5l4 21h-6z"/><path fill="#e8a09a" d="M9 14h3l-.5-5z"/></svg>
    <span class="dd dd-w"></span>
  </div>
  <div class="titlebar">
    <div class="qa">
      <svg class="ic"><use href="#new"/></svg><svg class="ic"><use href="#open"/></svg><svg class="ic"><use href="#save"/></svg><svg class="ic"><use href="#saveas"/></svg><svg class="ic"><use href="#print"/></svg><svg class="ic"><use href="#undo"/></svg><span class="dd dd-n"></span><svg class="ic"><use href="#redo"/></svg><span class="dd dd-n"></span>
      <div class="combo wsp"><svg class="ic"><use href="#gear"/></svg><span>AutoCAD Classic</span><span class="dd"></span></div>
      <span class="dd qa-more"></span>
    </div>
    <div class="doc">AutoCAD 2013 <span class="fname">123456789.dwg</span></div>
    <div class="info">
      <span class="more"></span>
      <div class="search">Type a keyword or phrase</div>
      <svg class="ic bino"><use href="#bino"/></svg>
      <svg class="ic"><use href="#user"/></svg>
      <span class="signin">Sign In</span>
      <span class="dd dd-n sign-dd"></span>
      <svg class="ic"><use href="#xch"/></svg>
      <svg class="ic store"><use href="#store"/></svg>
      <span class="dd dd-n"></span>
      <svg class="ic qm"><use href="#qm"/></svg>
      <span class="dd dd-n"></span>
    </div>
    <div class="winbtns">
      <div class="winframe"><span>&#8211;</span><span>&#10064;</span><span class="close">&#10005;</span></div>
    </div>
  </div>
  <nav class="menubar">
    <a>File</a><a>Edit</a><a>View</a><a>Insert</a><a>Format</a><a>Tools</a><a>Draw</a><a>Dimension</a><a>Modify</a><a>Parametric</a><a>Window</a><a>Help</a><a>Express</a>
    <div class="mdi"><span>&#8211;</span><span>&#10064;</span><span>&#10005;</span></div>
  </nav>
</header>

<section class="toolrows">
  <div class="row">
    <div class="tb std">
      <i class="grip"></i>
      <svg class="ic"><use href="#new"/></svg><svg class="ic"><use href="#open"/></svg><svg class="ic"><use href="#save"/></svg><i class="sep"></i>
      <svg class="ic"><use href="#print"/></svg><svg class="ic"><use href="#prev"/></svg><svg class="ic"><use href="#plot"/></svg><svg class="ic"><use href="#pub"/></svg><i class="sep"></i>
      <svg class="ic"><use href="#cut"/></svg><svg class="ic"><use href="#copy"/></svg><svg class="ic"><use href="#paste"/></svg><svg class="ic"><use href="#match"/></svg><svg class="ic"><use href="#blk"/></svg><i class="sep"></i>
      <svg class="ic"><use href="#undo"/></svg><span class="dd dd-t"></span><svg class="ic"><use href="#redo"/></svg><span class="dd dd-t dd-off"></span><i class="sep"></i>
      <svg class="ic"><use href="#pan"/></svg><svg class="ic"><use href="#zr"/></svg><svg class="ic"><use href="#zw"/></svg><svg class="ic"><use href="#zp"/></svg><i class="sep"></i>
      <svg class="ic"><use href="#prop"/></svg><svg class="ic"><use href="#dc"/></svg><svg class="ic"><use href="#sheet"/></svg><svg class="ic"><use href="#markup"/></svg><svg class="ic"><use href="#sset"/></svg><svg class="ic"><use href="#calc"/></svg><i class="sep"></i>
      <svg class="ic"><use href="#help"/></svg>
    </div>
    <div class="tb styles">
      <i class="grip"></i>
      <svg class="ic"><use href="#tsty"/></svg>
      <div class="combo w88 ctr"><span>Standard</span><span class="dd"></span></div>
      <i class="bar"></i>
      <svg class="ic"><use href="#dsty"/></svg>
      <div class="combo w88 ctr"><span>ISO-25</span><span class="dd"></span></div>
      <i class="bar"></i>
      <svg class="ic"><use href="#tbs"/></svg>
      <div class="combo w88"><span>Standard</span><span class="dd"></span></div>
      <i class="bar"></i>
      <svg class="ic"><use href="#mls"/></svg>
      <div class="combo w88 ctr"><span>Standard</span><span class="dd"></span></div>
    </div>
  </div>

  <div class="row row2">
    <div class="tb wk">
      <i class="grip"></i>
      <div class="combo wk-combo"><span>AutoCAD Classic</span><span class="dd"></span></div>
      <svg class="ic"><use href="#gear"/></svg><svg class="ic"><use href="#lock"/></svg>
    </div>
    <div class="tb lay">
      <i class="grip"></i>
      <svg class="ic lay-ic"><use href="#layer"/></svg>
      <div class="combo lay-combo">
        <svg class="ic"><use href="#a7"/></svg><svg class="ic sun" viewBox="0 0 16 16"><circle cx="8" cy="8" r="3.500" fill="#f0d060" stroke="#997"/><path stroke="#997" d="M8 1v2M8 13v2M1 8h2M13 8h2M3 3l1.500 1.500M11.500 11.500L13 13M3 13l1.500-1.500M11.500 4.500L13 3"/></svg><svg class="ic"><use href="#lock"/></svg><svg class="ic"><use href="#a4"/></svg><i class="swatch"></i><span>0</span>
      </div>
    </div>
    <div class="tb prop-tb">
      <div class="combo bylayer"><i class="swatch"></i><span>ByLayer</span><span class="dd"></span></div>
      <i class="bar"></i>
      <div class="combo lt lt1"><i class="ltline"></i><span>ByLayer</span><span class="dd"></span></div>
      <i class="bar"></i>
      <div class="combo lt lt2"><i class="ltline"></i><span>ByLayer</span><span class="dd"></span></div>
      <i class="bar"></i>
      <div class="combo off bycolor"><span>ByColor</span><span class="dd"></span></div>
      <span class="tb-x">&times;</span>
    </div>
  </div>

  <div class="row row3">
    <div class="tb">
      <i class="grip"></i>
      <svg class="ic"><use href="#uni"/></svg><svg class="ic"><use href="#sbt"/></svg><svg class="ic"><use href="#its"/></svg><i class="sep"></i>
      <svg class="ic"><use href="#s1"/></svg><svg class="ic"><use href="#s2"/></svg><svg class="ic"><use href="#s3"/></svg><svg class="ic"><use href="#s4"/></svg><svg class="ic"><use href="#s5"/></svg><svg class="ic"><use href="#s6"/></svg><svg class="ic"><use href="#s7"/></svg><svg class="ic"><use href="#s8"/></svg><i class="sep"></i>
      <svg class="ic"><use href="#s9"/></svg><svg class="ic"><use href="#s10"/></svg><svg class="ic"><use href="#s11"/></svg><svg class="ic"><use href="#s8"/></svg><i class="sep"></i>
      <svg class="ic"><use href="#s12"/></svg><svg class="ic"><use href="#s13"/></svg><svg class="ic"><use href="#s14"/></svg><svg class="ic"><use href="#s15"/></svg><svg class="ic"><use href="#s16"/></svg>
    </div>
    <div class="tb">
      <i class="grip"></i>
      <svg class="ic"><use href="#m1"/></svg><svg class="ic"><use href="#m2"/></svg><svg class="ic"><use href="#m3"/></svg><svg class="ic"><use href="#m4"/></svg><svg class="ic"><use href="#m5"/></svg><svg class="ic"><use href="#m6"/></svg><svg class="ic"><use href="#m7"/></svg><svg class="ic"><use href="#m8"/></svg><svg class="ic"><use href="#m9"/></svg><svg class="ic"><use href="#m10"/></svg><i class="sep"></i>
      <svg class="ic"><use href="#m11"/></svg><svg class="ic"><use href="#m12"/></svg><svg class="ic"><use href="#m13"/></svg><svg class="ic"><use href="#m14"/></svg><svg class="ic"><use href="#m15"/></svg><i class="sep"></i>
      <svg class="ic"><use href="#uni"/></svg><svg class="ic"><use href="#sbt"/></svg><svg class="ic"><use href="#its"/></svg><i class="sep"></i>
      <svg class="ic"><use href="#o3"/></svg><svg class="ic"><use href="#o4"/></svg><svg class="ic"><use href="#o5"/></svg><svg class="ic"><use href="#o6"/></svg>
    </div>
  </div>
</section>

<main class="work">
  <aside class="leftdock">
    <div class="vcol">
      <div class="vtb">
        <i class="vgrip"></i>
        <svg class="ic"><use href="#line"/></svg><svg class="ic"><use href="#xline"/></svg><svg class="ic"><use href="#pline"/></svg><svg class="ic"><use href="#polygon"/></svg><svg class="ic"><use href="#rect"/></svg><svg class="ic"><use href="#arc"/></svg><svg class="ic"><use href="#circle"/></svg><svg class="ic"><use href="#cloud"/></svg><svg class="ic"><use href="#spline"/></svg><svg class="ic"><use href="#ellipse"/></svg><svg class="ic"><use href="#earc"/></svg><svg class="ic"><use href="#ins"/></svg><svg class="ic"><use href="#mkb"/></svg><svg class="ic"><use href="#pt"/></svg><svg class="ic"><use href="#hatch"/></svg><svg class="ic"><use href="#grad"/></svg><svg class="ic"><use href="#reg"/></svg><svg class="ic"><use href="#tbl"/></svg>
        <span class="glyph">A</span>
        <svg class="ic"><use href="#addsel"/></svg>
      </div>
    </div>
    <div class="vcol">
      <div class="vtb">
        <i class="vgrip"></i>
        <svg class="ic"><use href="#erase"/></svg><svg class="ic"><use href="#cpo"/></svg><svg class="ic"><use href="#mir"/></svg><svg class="ic"><use href="#off"/></svg><svg class="ic"><use href="#arr"/></svg><svg class="ic"><use href="#mov"/></svg><svg class="ic"><use href="#rot"/></svg><svg class="ic"><use href="#scl"/></svg><svg class="ic"><use href="#str"/></svg><svg class="ic"><use href="#trim"/></svg><svg class="ic"><use href="#ext"/></svg><svg class="ic"><use href="#brk"/></svg><svg class="ic"><use href="#jn"/></svg><svg class="ic"><use href="#jn2"/></svg><svg class="ic"><use href="#cha"/></svg><svg class="ic"><use href="#fil"/></svg><svg class="ic"><use href="#ble"/></svg><svg class="ic"><use href="#exp"/></svg>
      </div>
      <div class="vtb">
        <i class="vgrip"></i>
        <svg class="ic"><use href="#orb"/></svg><svg class="ic"><use href="#orb2"/></svg><svg class="ic"><use href="#orb3"/></svg>
      </div>
    </div>
  </aside>

  <div class="center">
    <div class="viewrow">
      <svg class="canvas" viewBox="44 96 1119 444">
        <defs>
          <pattern id="minor" patternUnits="userSpaceOnUse" width="28.25" height="27" patternTransform="translate(-4.500 95.500) skewY(18.780)">
            <path d="M0 0V27M0 0H28.250" stroke="#262f3b" fill="none"/>
          </pattern>
          <pattern id="major" patternUnits="userSpaceOnUse" width="141.250" height="135" patternTransform="translate(-4.500 95.500) skewY(18.780)">
            <path d="M0 0V135M0 0H141.250" stroke="#363f4d" fill="none"/>
          </pattern>
          <linearGradient id="gcyl">
            <stop offset="0" stop-color="#b4b4b4"/><stop offset=".3" stop-color="#a4a4a4"/><stop offset=".55" stop-color="#9a9a9a"/><stop offset=".78" stop-color="#b4b4b4"/><stop offset="1" stop-color="#979797"/>
          </linearGradient>
          <linearGradient id="ghole">
            <stop offset="0" stop-color="#9c9c9c"/><stop offset=".25" stop-color="#c4c4c4"/><stop offset=".55" stop-color="#9a9a9a"/><stop offset="1" stop-color="#a6a6a6"/>
          </linearGradient>
          <linearGradient id="gside">
            <stop offset="0" stop-color="#a8a8a8"/><stop offset=".08" stop-color="#aaa"/><stop offset=".25" stop-color="#9d9d9d"/><stop offset=".7" stop-color="#9e9e9e"/><stop offset=".92" stop-color="#b0b0b0"/><stop offset="1" stop-color="#a0a0a0"/>
          </linearGradient>
        </defs>
        <rect x="44" y="96" width="1119" height="444" fill="#1f2733"/>
        <rect x="44" y="96" width="1119" height="444" fill="url(#minor)"/>
        <rect x="44" y="96" width="1119" height="444" fill="url(#major)"/>

        <!-- flange -->
        <path fill="url(#gside)" d="M270 395V420Q272 436 305 444L477 447 623 445Q645 440 648 424V397Q645 410 625 416L593 420 370 418 300 415Q272 408 270 395Z"/>
        <path fill="#bababa" d="M378 285L288 372Q268 388 270 395 272 408 300 415L370 418 593 420 625 416Q645 410 648 397 648 388 637 377L543 282Z"/>
        <ellipse cx="315.700" cy="391.700" rx="17.700" ry="10" fill="url(#ghole)"/>
        <ellipse cx="601.700" cy="395" rx="17.700" ry="10" fill="url(#ghole)"/>
        <path fill="#333" d="M382 282L395 293V375L352 388Z"/>
        <path fill="#000" d="M382 282L395 293 352 387 339 375Z"/>
        <path fill="#000" d="M535 284L525 298V373L565 389Z"/>
        <path fill="#121212" d="M535 284L527 297 565 389 580 378Z"/>
        <path fill="url(#gcyl)" d="M394 290V375Q420 393 461 393 500 393 525 375V290Z"/>
        <ellipse cx="461" cy="267.500" rx="82.500" ry="45.500" fill="#a8a8a8"/>
        <ellipse cx="461" cy="264.500" rx="82.500" ry="45.500" fill="#bcbcbc"/>
        <ellipse cx="460.700" cy="264" rx="49" ry="27.500" fill="url(#ghole)"/>

        <!-- view label -->
        <text class="vlabel" x="48" y="110">[&#8722;][Custom View][Realistic]</text>

        <!-- ucs -->
        <path stroke="#e85a5a" stroke-width="3.500" d="M51 489L81 501"/>
        <path stroke="#1a52c8" stroke-width="4" stroke-linecap="round" d="M82 501L100 483"/>
        <path stroke="#0d8a12" stroke-width="3.500" d="M81.700 502V473"/>
        <path stroke="#6fe06f" stroke-width="2" d="M81 475V472"/>
        <text class="ucs" x="47" y="489" fill="#8a1f24">X</text>
        <text class="ucs" x="81" y="469" fill="#0a7a12">Y</text>
        <text class="ucs" x="98" y="482" fill="#1a52c8">Z</text>

        <!-- view cube -->
        <ellipse cx="1110.700" cy="170" rx="38" ry="19" fill="none" stroke="#53575e" stroke-width="5"/>
        <path fill="#a3a3a3" d="M1089 137L1103 126 1131 132 1118 145Z"/>
        <path fill="#9c9c9c" d="M1089 137L1118 145 1118 171 1091 158Z"/>
        <path fill="#8a8a8a" d="M1118 145L1131 132 1129 158 1118 171Z"/>
        <text class="cube" transform="translate(1091 153) rotate(14)">BOTTOM</text>
        <text class="cube cube-i" transform="translate(1104 135) rotate(14) skewX(-40)">BACK</text>
        <text class="ring" transform="translate(1079 147) rotate(60)">S</text>
        <text class="ring" transform="translate(1083 186) rotate(-30)">E</text>
        <text class="ring" transform="translate(1139 171) rotate(30)">N</text>
        <rect x="1085.500" y="202.500" width="51" height="13" rx="3" fill="#646a78" stroke="#7d8391"/>
        <text class="unnamed" x="1088" y="212">Unnamed</text>
        <path d="M1129 207h5l-2.500 4z" fill="none" stroke="#8a8f9a"/>

        <!-- navigation bar -->
        <rect x="1136" y="234" width="24" height="159" rx="3" fill="#4b5059"/>
        <g class="nav" fill="none" stroke="#60646c">
          <circle cx="1155.500" cy="238" r="2"/><circle cx="1155.500" cy="389" r="2"/>
          <path stroke-width="2" d="M1141 252l5-3h7l3 4v9l-4 4h-7l-4-4z"/><circle cx="1148" cy="257.500" r="4.500" stroke-width="2"/>
          <path stroke-width="1.500" d="M1144 292l-3-5 2-1 2 3v-8h2v5-6h2v6-5h2v6-4h2l1 7-3 6h-5z"/>
          <path stroke-width="2" d="M1140 301l14 12M1154 301l-14 12"/><circle cx="1152" cy="313" r="3.500" stroke-width="2"/><path stroke-width="2" d="M1155 316l3 3"/>
          <ellipse cx="1148" cy="339" rx="9" ry="4" stroke-width="1.500"/><path fill="#5b5f67" d="M1146 331h4v6h4l-4 3v6h-4v-6l-4-3h4z"/>
          <path stroke-width="1" d="M1140 362h6v4h-6zM1147 362h5v4h-5zM1153 362h5v4h-5zM1140 369h12v10h-12z"/><path fill="#60646c" d="M1144 371l5 3-5 4z"/>
        </g>
      </svg>
      <div class="vscroll"><span class="sarrow up"></span><span class="thumb"></span><span class="sarrow dn"></span></div>
    </div>
    <div class="tabbar">
      <div class="tabnav"><span>|&#9666;</span><span>&#9666;</span><span>&#9656;</span><span>&#9656;|</span></div>
      <span class="tab active">Model</span><span class="tab">Layout1</span><span class="tab">Layout2</span>
      <div class="hscroll"><span class="harrow">&#9666;</span><span class="hthumb"></span><span class="harrow">&#9656;</span></div>
    </div>
    <div class="row bottombars">
      <div class="tb">
        <i class="grip"></i>
        <svg class="ic"><use href="#vs"/></svg><i class="sep"></i>
        <svg class="ic"><use href="#v1"/></svg><svg class="ic"><use href="#v2"/></svg><svg class="ic"><use href="#v3"/></svg><svg class="ic"><use href="#v4"/></svg><i class="sep"></i>
        <svg class="ic"><use href="#v5"/></svg>
      </div>
      <div class="tb">
        <i class="grip"></i>
        <svg class="ic"><use href="#v6"/></svg><i class="sep"></i>
        <svg class="ic"><use href="#c1"/></svg><svg class="ic"><use href="#c2"/></svg><svg class="ic"><use href="#c3"/></svg><svg class="ic"><use href="#c1"/></svg><svg class="ic"><use href="#c4"/></svg><svg class="ic"><use href="#c4"/></svg><i class="sep"></i>
        <svg class="ic"><use href="#i1"/></svg><svg class="ic"><use href="#i2"/></svg><svg class="ic"><use href="#i3"/></svg><svg class="ic"><use href="#i4"/></svg><i class="sep"></i>
        <svg class="ic"><use href="#cam"/></svg><i class="sep"></i>
        <svg class="ic"><use href="#zv"/></svg>
        <div class="combo off zv-combo"><span></span><span class="dd"></span></div>
      </div>
      <div class="tb ucs-tb">
        <i class="grip"></i>
        <svg class="ic"><use href="#ucs1"/></svg><svg class="ic"><use href="#ucs2"/></svg><i class="bar"></i>
        <div class="combo view-combo"><svg class="ic"><use href="#vleft"/></svg><span>Left</span><span class="dd"></span></div>
      </div>
    </div>
  </div>

  <aside class="rightdock">
    <div class="vtb">
      <i class="vgrip"></i>
      <svg class="ic"><use href="#d1"/></svg><svg class="ic"><use href="#d2"/></svg><svg class="ic"><use href="#d3"/></svg><svg class="ic"><use href="#d4"/></svg><i class="hsep"></i>
      <svg class="ic"><use href="#d5"/></svg><svg class="ic"><use href="#d6"/></svg><svg class="ic"><use href="#d7"/></svg><svg class="ic"><use href="#d8"/></svg><i class="hsep"></i>
      <svg class="ic"><use href="#d9"/></svg><svg class="ic"><use href="#d10"/></svg><svg class="ic"><use href="#d11"/></svg><svg class="ic"><use href="#d12"/></svg><svg class="ic"><use href="#d13"/></svg><i class="hsep"></i>
      <svg class="ic"><use href="#d14"/></svg><svg class="ic"><use href="#d15"/></svg><svg class="ic"><use href="#d16"/></svg><svg class="ic"><use href="#d17"/></svg><i class="hsep"></i>
      <svg class="ic"><use href="#d18"/></svg><svg class="ic"><use href="#d19"/></svg><svg class="ic"><use href="#d20"/></svg><i class="hsep"></i>
      <svg class="ic"><use href="#d21"/></svg>
    </div>
    <div class="vtb">
      <i class="vgrip"></i>
      <svg class="ic"><use href="#o1"/></svg><svg class="ic"><use href="#o2"/></svg><svg class="ic"><use href="#o7"/></svg><svg class="ic"><use href="#o8"/></svg><svg class="ic"><use href="#o2"/></svg><svg class="ic"><use href="#o9"/></svg>
    </div>
  </aside>
</main>

<section class="cmd">
  <div class="cmd-side">
    <i class="cmd-grip"></i>
    <span class="cmd-x">&#10005;</span>
    <svg class="wrench" viewBox="0 0 16 16"><path fill="#e4e4e4" d="M2 3l2-1 3 3 1.500-.5L13 10l1 3-2 1-3-1-4.500-4.500L5 7z"/></svg>
  </div>
  <div class="cmd-log">
    <div class="cmd-hist">
      <p>Autodesk DWG.  This file is a TrustedDWG last saved by an Autodesk application or Autodesk licensed application.</p>
      <p>Command:</p>
    </div>
    <div class="cmd-input"></div>
  </div>
</section>

<footer class="status">
  <div class="coords">5576.5129, -24582.6773, 0.0000</div>
  <div class="toggles">
    <b><svg class="ic"><use href="#t1"/></svg></b><b><svg class="ic"><use href="#t2"/></svg></b><b class="on"><svg class="ic"><use href="#t3"/></svg></b><b class="on"><svg class="ic"><use href="#t4"/></svg></b><b><svg class="ic"><use href="#t5"/></svg></b><b class="on"><svg class="ic"><use href="#t6"/></svg></b><b class="on"><svg class="ic"><use href="#t7"/></svg></b><b class="on"><svg class="ic"><use href="#t8"/></svg></b><b class="on"><svg class="ic"><use href="#t9"/></svg></b><b class="on"><svg class="ic"><use href="#t10"/></svg></b><b><svg class="ic"><use href="#t11"/></svg></b><b class="on"><svg class="ic"><use href="#t12"/></svg></b><b><svg class="ic"><use href="#t13"/></svg></b><b><svg class="ic"><use href="#t14"/></svg></b><b><svg class="ic"><use href="#t15"/></svg></b>
  </div>
  <div class="tray">
    <span class="model">MODEL</span>
    <svg class="ic lay1"><use href="#l1"/></svg><svg class="ic"><use href="#l2"/></svg>
    <div class="anno"><svg class="ic"><use href="#a1"/></svg><span>1:1</span><span class="dd"></span></div>
    <svg class="ic a2"><use href="#a2"/></svg><svg class="ic a3"><use href="#a3"/></svg>
    <div class="tray-ics"><svg class="ic"><use href="#gear"/></svg><svg class="ic"><use href="#a4"/></svg><svg class="ic"><use href="#a5"/></svg></div>
    <div class="tray-hi"><svg class="ic"><use href="#a6"/></svg><svg class="ic"><use href="#a7"/></svg></div>
    <span class="dd tray-dd"></span>
    <svg class="ic"><use href="#a8"/></svg>
  </div>
</footer>

<div class="watermark">素材天下 <span class="wm-url">sucaisucai.com</span> 编号: <span class="wm-num">05714806</span></div>
</body>
</html>
```

FILE: styles.css
```css
* {
  margin: 0; padding: 0; box-sizing: border-box;
}
html, body {
  width: 1200px; height: 645px; overflow: hidden;
}
body {
  position: relative;
  font-family: "Open Sans", "Liberation Sans", sans-serif;
  font-size: 9px;
  color: #333;
  background-color: #676767;
  display: flex;
  flex-direction: column;
}
.defs {
  width: 0; height: 0; position: absolute;
}
.ic {
  width: 16px; height: 16px; flex: none;
  fill: none; stroke: #555; stroke-width: 1;
}

/* small black dropdown triangle */
.dd {
  flex: none;
  width: 0; height: 0;
  border-left: 3.5px solid transparent;
  border-right: 3.5px solid transparent;
  border-top: 4px solid #111;
}
.dd-n { border-left-width: 2px; border-right-width: 2px; border-top: 2.500px solid #444; }
.dd-w { border-top-color: #fff; }
.dd-t { border-left-width: 2.500px; border-right-width: 2.500px; border-top: 3px solid #444; margin: 0 2.500px; }
.dd-off { border-top-color: #bbb; }

/* title + menu */
.top {
  display: grid;
  grid-template-columns: 30px 1fr;
  grid-template-rows: 18px 15px;
  height: 33px;
}
.appbtn {
  grid-row: 1 / 3;
  display: flex; align-items: flex-end;
  background: linear-gradient(#8b8b8b, #6a6a6a);
  position: relative;
  padding: 0 0 13px 23px;
}
.logo {
  position: absolute; left: 3px; top: 2px;
  width: 18px; height: 21px;
}
.titlebar {
  display: flex;
  height: 18px;
  background: linear-gradient(#dcdcdc, #d2d2d2);
}
.qa {
  width: 295px; flex: none;
  padding-left: 5px;
  display: flex; align-items: center; gap: 2px;
  background: linear-gradient(#808080, #6f6f6f);
}
.qa .dd-n { margin: 0 2px; }
.combo {
  display: flex; align-items: center;
  height: 16px;
  padding: 0 5px 0 4px;
  background: linear-gradient(#fafafa, #e8e8e8 55%, #d4d4d4);
  border: 1px solid #8d8d8d;
  color: #333;
  font-size: 9px;
  white-space: nowrap;
  flex: none;
}
.combo span:first-of-type { flex: 1; }
.combo.ctr span:first-of-type { text-align: center; }
.wsp {
  width: 135px; height: 14px;
  border: none; border-radius: 2px;
  margin-left: 0; padding-left: 1px;
}
.wsp .ic { margin-right: 2px; width: 13px; height: 13px; stroke: #444; }
.qa-more {
  margin-left: 4px; border-left-width: 3px; border-right-width: 3px; border-top-width: 3.500px;
  box-shadow: 0 -2px 0 #111;
}
.doc {
  flex: 1;
  padding-left: 162px;
  line-height: 18px;
  font-size: 9.500px;
  color: #333;
  white-space: nowrap;
}
.fname { margin-left: 6px; letter-spacing: -.45px; }
.info {
  width: 333px; flex: none;
  display: flex; align-items: center;
  background: linear-gradient(#848484, #757575);
}
.more {
  width: 10px; height: 18px;
  background: #555;
  position: relative;
}
.more::after {
  content: '';
  position: absolute; left: 3px; top: 6px;
  border-left: 4px solid #111;
  border-top: 3px solid transparent; border-bottom: 3px solid transparent;
}
.search {
  width: 134px; height: 16px;
  margin: 0 3px 0 1px;
  padding-left: 3px;
  background-color: #f6f6f6;
  color: #666;
  font-style: italic;
  font-size: 8.500px;
  line-height: 16px;
}
.info .ic { width: 13px; height: 13px; }
.info .bino { margin-right: 4px; margin-left: 1px; }
.signin { margin-left: 4px; width: 64px; color: #d4d4d4; font-size: 9.500px; }
.sign-dd { margin-right: 5px; }
.info .store { margin: 0 2px 0 5px; }
.info .qm { margin: 0 4px 0 15px; }
.winbtns {
  width: 92px; flex: none;
  display: flex;
  padding-left: 13px;
  background: linear-gradient(#e2e2e2, #cfcfcf);
}
.winframe {
  display: flex;
  width: 77px; height: 14px;
  border: 1px solid #b4b4b4; border-top: none;
  border-radius: 0 0 4px 4px;
  background: linear-gradient(#ececec, #d6d6d6);
  color: #666;
  font-size: 9px;
  line-height: 13px;
  text-align: center;
}
.winframe span { width: 20px; }
.winframe .close { width: 35px; }
.menubar {
  display: flex; align-items: center;
  height: 15px;
  padding-left: 12px;
  background: linear-gradient(#555 0, #8c8c8c 12%, #6e6e6e 100%);
  color: #dcdcdc;
  font-size: 9.500px;
}
.menubar a { flex: none; }
.menubar a:nth-child(1)  { width: 31px; }
.menubar a:nth-child(2)  { width: 33px; }
.menubar a:nth-child(3)  { width: 36px; }
.menubar a:nth-child(4)  { width: 41px; }
.menubar a:nth-child(5)  { width: 46px; }
.menubar a:nth-child(6)  { width: 40px; }
.menubar a:nth-child(7)  { width: 38px; }
.menubar a:nth-child(8)  { width: 61px; }
.menubar a:nth-child(9)  { width: 46px; }
.menubar a:nth-child(10) { width: 61px; }
.menubar a:nth-child(11) { width: 51px; }
.menubar a:nth-child(12) { width: 37px; }
.mdi {
  margin-left: auto;
  display: flex; gap: 3px;
  padding-right: 5px;
  color: #222;
  font-size: 10px;
}

/* horizontal toolbars */
.toolrows {
  display: flex; flex-direction: column;
  height: 62px;
  padding: 1px 0 0 2px;
}
.row { display: flex; height: 18px; flex: none; }
.row2 { margin-top: 3px; }
.row3 { margin-top: 1px; }
.tb {
  display: flex; align-items: center;
  height: 18px;
  background-color: #efefef;
  flex: none;
}
.tb > .ic { margin: 0 .65px; }
.grip {
  flex: none;
  width: 5px; height: 100%;
  background: #565656 repeating-linear-gradient(#777 0 1px, #565656 1px 3px);
}
.tb + .tb > .grip { margin-right: 2.600px; }
.sep {
  flex: none;
  width: 2px; height: 14px;
  margin: 0 1px;
  background: linear-gradient(90deg, #a8a8a8 50%, transparent 50%);
}
.bar {
  flex: none;
  width: 3px; height: 16px;
  margin: 0 1px;
  background-color: #bdbdbd;
}
.std { padding-right: 6.500px; }
.styles { background-color: #676767; }
.tb.styles > .grip { width: 3px; margin-right: 1px; }
.tb.styles > .ic { margin: 0 0 0 3px; background-color: #efefef; height: 18px; }
.tb.styles > .grip + .ic { margin: 0 2px 0 0; }
.w88 { width: 88px; }
.wk { width: 170px; }
.wk-combo { width: 130px; padding-left: 7px; }
.tb.wk > .ic { margin: 0 0 0 1px; }
.tb.lay { margin-left: 3px; width: 189px; background-color: #676767; }
.tb.lay > .grip { margin-right: 0; }
.tb.lay > .lay-ic { background-color: #efefef; margin: 0 1px 0 0; width: 17px; height: 18px; }
.lay-combo { width: 165px; height: 18px; border-radius: 3px 0 0 3px; gap: 1px; padding-left: 5px; }
.lay-combo .ic { width: 12px; height: 12px; }
.swatch {
  flex: none;
  width: 8px; height: 8px;
  background-color: #fff;
  border: 1px solid #222;
  margin-right: 3px;
}
.tb.prop-tb { margin-left: 7px; background-color: #676767; }
.bylayer { width: 112px; }
.lt span:first-of-type { flex: none; }
.lt .dd { margin-left: auto; }
.ltline { flex: none; height: 1px; background-color: #222; margin-right: 4px; }
.lt1 { width: 118px; }
.lt1 .ltline { width: 45px; }
.lt2 { width: 92px; margin-left: 2px; }
.lt2 .ltline { width: 28px; }
.off { color: #9a9a9a; }
.off .dd { border-top-color: #aaa; }
.bycolor { width: 89px; padding-left: 6px; }
.tb-x {
  align-self: flex-start;
  width: 6px; height: 18px;
  background-color: #555;
  color: #eee;
  font-size: 7px; line-height: 6px;
}
.row3 .tb + .tb { margin-left: 0; }

/* work area */
.work {
  display: flex;
  height: 485px;
  border-top: 1px solid #9a9a9a;
}
.leftdock {
  width: 44px; flex: none;
  display: flex; gap: 4px;
  padding-left: 1px;
}
.vcol { width: 17px; display: flex; flex-direction: column; }
.vtb {
  width: 18px;
  display: flex; flex-direction: column; align-items: center;
  background-color: #efefef;
  flex: none;
}
.vcol .vtb { width: 17px; }
.vtb .ic { margin: .25px 0; }
.vgrip {
  width: 100%; height: 6px; flex: none;
  background: #565656 repeating-linear-gradient(90deg, #777 0 1px, #565656 1px 3px);
}
.glyph {
  height: 16.500px;
  font: 15px/16px "Liberation Sans", sans-serif;
  color: #222;
}
.hsep {
  width: 15px; height: 1px; flex: none;
  margin: 2px 0;
  background-color: #b4b4b4;
}
.center {
  width: 1133px; flex: none;
  display: flex; flex-direction: column;
}
.viewrow { display: flex; height: 444px; }
.canvas { width: 1119px; height: 444px; flex: none; display: block; }
.vlabel { font: 8.500px "Open Sans", sans-serif; fill: #d8d8d8; }
.ucs { font: 14px "Liberation Sans", sans-serif; }
.cube { font: bold 7px "Liberation Sans", sans-serif; fill: #333; }
.cube-i { font-size: 5px; fill: #444; }
.ring { font: bold 9px "Liberation Sans", sans-serif; fill: #bcbcbc; }
.unnamed { font: 8px "Open Sans", sans-serif; fill: #9ea2ac; }
.vscroll {
  width: 14px; flex: none;
  display: flex; flex-direction: column; align-items: center;
  background-color: #f2f2f2;
  padding: 4px 0;
}
.thumb {
  width: 11px; height: 13px;
  margin-top: 6px;
  background-color: #fbfbfb;
  border: 1px solid #c4c4c4;
  border-radius: 2px;
}
.sarrow {
  width: 0; height: 0;
  border-left: 2.500px solid transparent;
  border-right: 2.500px solid transparent;
}
.sarrow.up { border-bottom: 3px solid #222; }
.sarrow.dn { border-top: 3px solid #222; margin-top: auto; }
.tabbar {
  display: flex; align-items: center;
  height: 13px;
  background-color: #f0f0f0;
  font-size: 8px;
}
.tabnav {
  display: flex;
  width: 48px;
  padding-left: 0;
  color: #666;
  font-size: 7px;
}
.tabnav span { width: 11px; text-align: center; }
.tab {
  position: relative;
  height: 13px;
  padding: 0 7px 0 6px;
  line-height: 13px;
  color: #333;
}
.tab::after {
  content: '';
  position: absolute; right: 0; top: 0;
  width: 1px; height: 13px;
  background-color: #777;
  transform: skewX(-20deg);
}
.tab.active {
  width: 33px;
  padding: 0 0 0 6px;
  margin-right: 3px;
  background-color: #1f2733;
  color: #f4f4f4;
  clip-path: polygon(0 0, 100% 0, 90% 100%, 12% 100%);
}
.tab.active::after { display: none; }
.hscroll {
  margin-left: auto;
  width: 380px; height: 13px;
  margin-right: 14px;
  display: flex; align-items: center; justify-content: space-between;
  padding: 0 8px 0 7px;
  color: #333;
  font-size: 7px;
  border-left: 1px solid #ccc;
  position: relative;
}
.hthumb {
  position: absolute; left: 247px; top: 1px;
  width: 11px; height: 10px;
  background-color: #e4e4e4;
  border: 1px solid #bdbdbd;
  border-radius: 2px;
}
.bottombars { margin-top: 3px; }
.bottombars .tb + .tb { margin-left: 1px; }
.zv-combo { width: 103px; margin-left: 2px; }
.ucs-tb .bar { margin: 0 1px 0 2px; }
.view-combo { width: 130px; padding-left: 2px; }
.view-combo .ic { margin-right: 2px; }
.rightdock {
  width: 23px; flex: none;
  padding: 0 0 0 3px;
}
.rightdock .vtb { margin-bottom: 1px; }

/* command window */
.cmd {
  display: flex;
  height: 48px;
  border-top: 1px solid #9a9a9a;
}
.cmd-side {
  width: 17px; flex: none;
  display: flex; flex-direction: column; align-items: center;
  background-color: #5d5d5d;
  color: #eee;
}
.cmd-grip {
  width: 100%; height: 6px;
  background: repeating-linear-gradient(90deg, #8a8a8a 0 1px, #5d5d5d 1px 3px);
}
.cmd-x { margin-top: 3px; font-size: 9px; line-height: 12px; }
.wrench { width: 12px; height: 12px; margin-top: 3px; }
.cmd-log { flex: 1; display: flex; flex-direction: column; }
.cmd-hist {
  height: 30px;
  padding: 6px 0 0 2px;
  background-color: #c8c8c8;
  border-bottom: 1px solid #9a9a9a;
  font: 8.730px/11px "DejaVu Sans Mono", "Liberation Mono", monospace;
  color: #1a1a1a;
}
.cmd-hist p { white-space: pre; }
.cmd-input {
  flex: 1;
  background-color: #fff;
  border-bottom: 1px solid #333;
}

/* status bar */
.status {
  display: flex;
  height: 17px;
  background: linear-gradient(#666, #8e8e8e);
}
.coords {
  width: 165px;
  padding-left: 9px;
  line-height: 17px;
  font-size: 8.500px;
  letter-spacing: -.25px;
  color: #222;
}
.toggles { display: flex; height: 17px; }
.toggles b {
  width: 16.500px; height: 17px;
  display: flex; align-items: center; justify-content: center;
  background: linear-gradient(#a8a8a8, #c8c8c8);
}
.toggles b.on { background: linear-gradient(#d6edf4, #a6d4e2); }
.toggles .ic { width: 14px; height: 14px; }
.tray {
  margin-left: auto;
  width: 263px;
  display: flex; align-items: center;
  height: 17px;
}
.tray .ic { width: 14px; height: 14px; margin: 0 1px; }
.model {
  width: 32px;
  background-color: #b4b4b4;
  color: #333;
  line-height: 17px;
  text-align: center;
  font-size: 9px;
}
.anno {
  display: flex; align-items: center; gap: 2px;
  margin-left: 10px;
  color: #333;
  font-size: 10px;
}
.tray .anno .ic { margin: 0; }
.tray .a2 { margin: 0 0 0 1px; }
.tray .a3 { margin: 0 0 0 1px; }
.tray-ics { display: flex; margin-left: 7px; background-color: #a4a4a4; height: 17px; align-items: center; }
.tray-hi { display: flex; gap: 2px; margin-left: 3px; padding: 0 1px; background-color: #bcbcbc; height: 17px; align-items: center; }
.tray .tray-hi .ic { margin: 0; }
.tray-dd { margin: 0 1px 0 8px; border-left-width: 2.500px; border-right-width: 2.500px; border-top-width: 3.500px; }

/* stock-site stamp lying over the command line */
.watermark {
  position: absolute; left: 10px; top: 610px;
  font: 700 19px/18px "Noto Sans CJK SC", "Noto Sans", sans-serif;
  color: #6e6e6e;
  -webkit-text-stroke: .4px #3a3a3a;
  white-space: nowrap;
}
.wm-url { margin: 0 9px 0 1px; letter-spacing: -.2px; }
.wm-num { margin-left: 8px; font-size: 20px; letter-spacing: .8px; }
```
